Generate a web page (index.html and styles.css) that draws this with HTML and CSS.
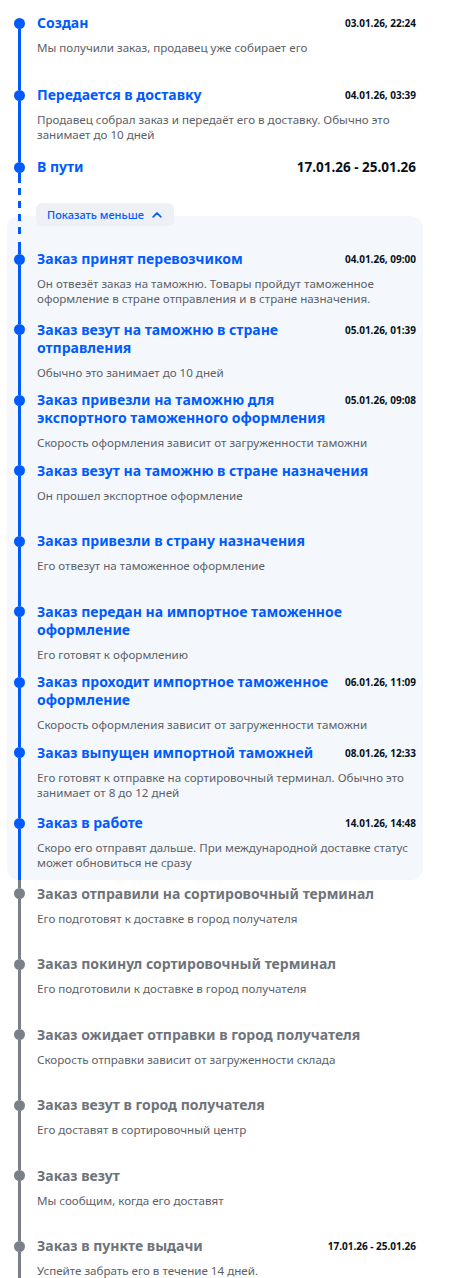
FILE: index.html
```html
<!DOCTYPE html>
<html lang="ru">
<head>
    <meta charset="UTF-8">
    <meta name="viewport" content="width=device-width, initial-scale=1.0">
    <title>Отслеживание заказа</title>
    <link rel="stylesheet" href="styles.css">
</head>
<body>
    <div class="timeline">
        <div class="step step-done step-top step-first">
            <div class="rail"><span class="rail-dot"></span></div>
            <div class="step-body">
                <div class="step-head">
                    <div class="step-title">Создан</div>
                    <div class="step-date">03.01.26, 22:24</div>
                </div>
                <div class="step-text">Мы получили заказ, продавец уже собирает его</div>
            </div>
        </div>

        <div class="step step-done step-top">
            <div class="rail"><span class="rail-dot"></span></div>
            <div class="step-body">
                <div class="step-head">
                    <div class="step-title">Передается в доставку</div>
                    <div class="step-date">04.01.26, 03:39</div>
                </div>
                <div class="step-text">Продавец собрал заказ и передаёт его в доставку. Обычно это занимает до 10 дней</div>
            </div>
        </div>

        <div class="step step-done step-current">
            <div class="rail"><span class="rail-dot"></span></div>
            <div class="step-body">
                <div class="step-head">
                    <div class="step-title">В пути</div>
                    <div class="step-date step-date-big">17.01.26 - 25.01.26</div>
                </div>
            </div>
        </div>

        <!-- collapse toggle, dashed rail -->
        <div class="toggle-row">
            <div class="rail-dashed"></div>
            <button class="toggle-btn">
                Показать меньше
                <svg width="10" height="7" viewBox="0 0 10 7"><polyline points="1.2,5.8 5,2 8.8,5.8" fill="none" stroke="currentColor" stroke-width="1.7" stroke-linecap="round" stroke-linejoin="round"/></svg>
            </button>
        </div>

        <div class="card">
            <div class="step step-done">
                <div class="rail"><span class="rail-dot"></span></div>
                <div class="step-body">
                    <div class="step-head">
                        <div class="step-title">Заказ принят перевозчиком</div>
                        <div class="step-date">04.01.26, 09:00</div>
                    </div>
                    <div class="step-text">Он отвезёт заказ на таможню. Товары пройдут таможенное оформление в стране отправления и в стране назначения.</div>
                </div>
            </div>

            <div class="step step-done">
                <div class="rail"><span class="rail-dot"></span></div>
                <div class="step-body">
                    <div class="step-head">
                        <div class="step-title">Заказ везут на таможню в стране отправления</div>
                        <div class="step-date">05.01.26, 01:39</div>
                    </div>
                    <div class="step-text">Обычно это занимает до 10 дней</div>
                </div>
            </div>

            <div class="step step-done">
                <div class="rail"><span class="rail-dot"></span></div>
                <div class="step-body">
                    <div class="step-head">
                        <div class="step-title">Заказ привезли на таможню для экспортного таможенного оформления</div>
                        <div class="step-date">05.01.26, 09:08</div>
                    </div>
                    <div class="step-text">Скорость оформления зависит от загруженности таможни</div>
                </div>
            </div>

            <div class="step step-done">
                <div class="rail"><span class="rail-dot"></span></div>
                <div class="step-body">
                    <div class="step-head">
                        <div class="step-title">Заказ везут на таможню в стране назначения</div>
                    </div>
                    <div class="step-text">Он прошел экспортное оформление</div>
                </div>
            </div>

            <div class="step step-done">
                <div class="rail"><span class="rail-dot"></span></div>
                <div class="step-body">
                    <div class="step-head">
                        <div class="step-title">Заказ привезли в страну назначения</div>
                    </div>
                    <div class="step-text">Его отвезут на таможенное оформление</div>
                </div>
            </div>

            <div class="step step-done">
                <div class="rail"><span class="rail-dot"></span></div>
                <div class="step-body">
                    <div class="step-head">
                        <div class="step-title">Заказ передан на импортное таможенное оформление</div>
                    </div>
                    <div class="step-text">Его готовят к оформлению</div>
                </div>
            </div>

            <div class="step step-done">
                <div class="rail"><span class="rail-dot"></span></div>
                <div class="step-body">
                    <div class="step-head">
                        <div class="step-title">Заказ проходит импортное таможенное оформление</div>
                        <div class="step-date">06.01.26, 11:09</div>
                    </div>
                    <div class="step-text">Скорость оформления зависит от загруженности таможни</div>
                </div>
            </div>

            <div class="step step-done">
                <div class="rail"><span class="rail-dot"></span></div>
                <div class="step-body">
                    <div class="step-head">
                        <div class="step-title">Заказ выпущен импортной таможней</div>
                        <div class="step-date">08.01.26, 12:33</div>
                    </div>
                    <div class="step-text">Его готовят к отправке на сортировочный терминал. Обычно это занимает от 8 до 12 дней</div>
                </div>
            </div>

            <div class="step step-done">
                <div class="rail"><span class="rail-dot"></span></div>
                <div class="step-body">
                    <div class="step-head">
                        <div class="step-title">Заказ в работе</div>
                        <div class="step-date">14.01.26, 14:48</div>
                    </div>
                    <div class="step-text">Скоро его отправят дальше. При международной доставке статус может обновиться не сразу</div>
                </div>
            </div>
        </div>

        <div class="step step-next">
            <div class="rail"><span class="rail-dot"></span></div>
            <div class="step-body">
                <div class="step-head">
                    <div class="step-title">Заказ отправили на сортировочный терминал</div>
                </div>
                <div class="step-text">Его подготовят к доставке в город получателя</div>
            </div>
        </div>

        <div class="step step-next">
            <div class="rail"><span class="rail-dot"></span></div>
            <div class="step-body">
                <div class="step-head">
                    <div class="step-title">Заказ покинул сортировочный терминал</div>
                </div>
                <div class="step-text">Его подготовили к доставке в город получателя</div>
            </div>
        </div>

        <div class="step step-next">
            <div class="rail"><span class="rail-dot"></span></div>
            <div class="step-body">
                <div class="step-head">
                    <div class="step-title">Заказ ожидает отправки в город получателя</div>
                </div>
                <div class="step-text">Скорость отправки зависит от загруженности склада</div>
            </div>
        </div>

        <div class="step step-next">
            <div class="rail"><span class="rail-dot"></span></div>
            <div class="step-body">
                <div class="step-head">
                    <div class="step-title">Заказ везут в город получателя</div>
                </div>
                <div class="step-text">Его доставят в сортировочный центр</div>
            </div>
        </div>

        <div class="step step-next">
            <div class="rail"><span class="rail-dot"></span></div>
            <div class="step-body">
                <div class="step-head">
                    <div class="step-title">Заказ везут</div>
                </div>
                <div class="step-text">Мы сообщим, когда его доставят</div>
            </div>
        </div>

        <div class="step step-next">
            <div class="rail"><span class="rail-dot"></span></div>
            <div class="step-body">
                <div class="step-head">
                    <div class="step-title">Заказ в пункте выдачи</div>
                    <div class="step-date">17.01.26 - 25.01.26</div>
                </div>
                <div class="step-text">Успейте забрать его в течение 14 дней.</div>
            </div>
        </div>
    </div>
</body>
</html>
```

FILE: styles.css
```css
body {
    margin: 0;
    background: #ffffff;
    font-family: "Noto Sans", "Liberation Sans", sans-serif;
    color: #07111b;
}

.timeline {
    width: 416px;
    padding-top: 9px;
}

.step {
    display: grid;
    grid-template-columns: 37px 1fr;
    min-height: 70.5px;
}

.step-top {
    min-height: 72px;
}

.step-current {
    min-height: 30px;
}

/* rail: line above dot, dot, line below */
.rail {
    display: flex;
    flex-direction: column;
    align-items: center;
    padding-left: 2px;
}

.rail::before {
    content: "";
    width: 3px;
    height: 8.5px;
    flex: none;
    background: currentColor;
}

.rail::after {
    content: "";
    width: 3px;
    flex: 1;
    background: currentColor;
}

.rail-dot {
    width: 11px;
    height: 11px;
    flex: none;
    border-radius: 50%;
    background: currentColor;
}

.step-first .rail::before {
    visibility: hidden;
}

.step-done .rail { color: #005bff; }
.step-next .rail { color: #79808a; }

.step-body {
    padding-top: 5px;
    min-width: 0;
}

.step-head {
    display: flex;
    justify-content: space-between;
    align-items: flex-start;
    gap: 16px;
}

.step-title {
    font-size: 14px;
    line-height: 18px;
    font-weight: 700;
    color: #005bff;
}

.step-next .step-title {
    color: #6e747b;
}

.step-date {
    flex: none;
    font-size: 10px;
    line-height: 18px;
    font-weight: 700;
    color: #07111b;
    white-space: nowrap;
}

.step-date-big {
    font-size: 13.5px;
}

.step-text {
    margin-top: 8px;
    font-size: 11.6px;
    line-height: 15px;
    color: #5c6168;
}

.toggle-row {
    display: grid;
    grid-template-columns: 37px auto;
    justify-content: start;
    height: 33px;
}

.rail-dashed {
    justify-self: center;
    margin-left: 2px;
    margin-top: 5px;
    width: 3px;
    height: 46px;
    background: repeating-linear-gradient(to bottom, #005bff 0 7px, transparent 7px 13px);
}

.toggle-btn {
    display: flex;
    align-items: center;
    gap: 8px;
    margin-top: 20px;
    margin-left: -1px;
    height: 23px;
    padding: 0 12px 0 11px;
    border: none;
    border-radius: 6px;
    background: #edf0f5;
    color: #005bff;
    font-family: inherit;
    font-size: 11px;
    font-weight: 500;
    cursor: pointer;
}

.card {
    margin: 0 -7px 0 7px;
    padding: 29px 7px 0 0;
    background: #f4f8fc;
    border-radius: 12px;
}

.card .step {
    grid-template-columns: 30px 1fr;
}

.card .rail {
    padding-left: 0;
    padding-right: 5px;
}

.card .step:first-child .rail::before {
    margin-top: -3px;
    height: 11.5px;
}
```
